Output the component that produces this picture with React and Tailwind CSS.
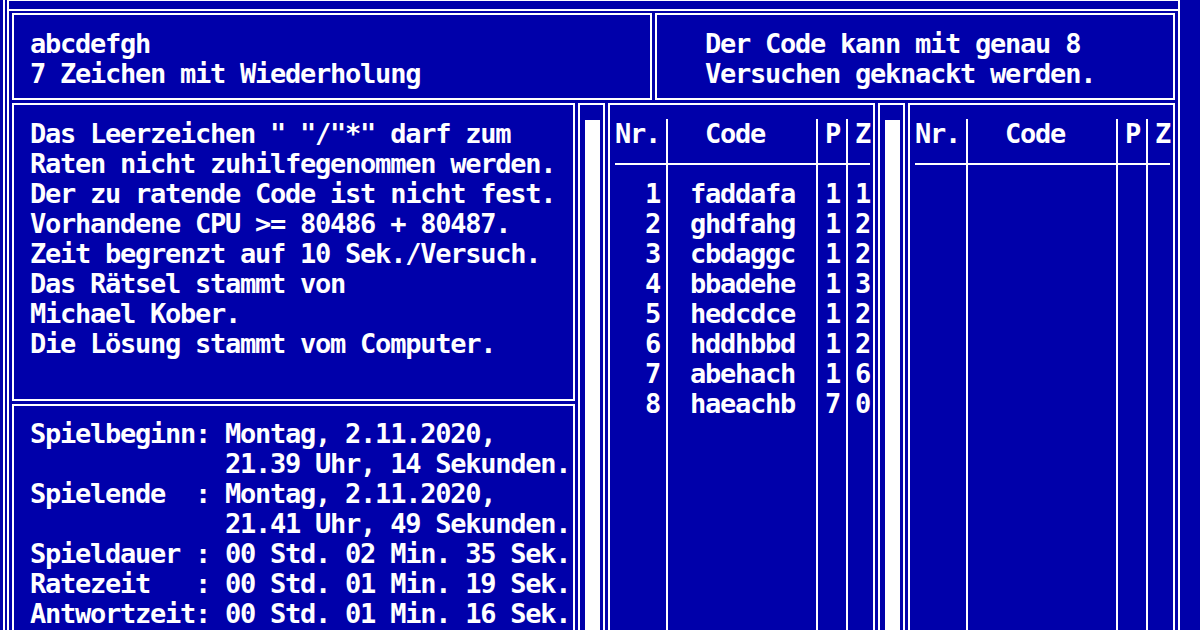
const tries = [
  ['1', 'faddafa', '1', '1'],
  ['2', 'ghdfahg', '1', '2'],
  ['3', 'cbdaggc', '1', '2'],
  ['4', 'bbadehe', '1', '3'],
  ['5', 'hedcdce', '1', '2'],
  ['6', 'hddhbbd', '1', '2'],
  ['7', 'abehach', '1', '6'],
  ['8', 'haeachb', '7', '0'],
];

const rules = [
  'Das Leerzeichen " "/"*" darf zum',
  'Raten nicht zuhilfegenommen werden.',
  'Der zu ratende Code ist nicht fest.',
  'Vorhandene CPU >= 80486 + 80487.',
  'Zeit begrenzt auf 10 Sek./Versuch.',
  'Das Rätsel stammt von',
  'Michael Kober.',
  'Die Lösung stammt vom Computer.',
];

const times = [
  'Spielbeginn: Montag, 2.11.2020,',
  '             21.39 Uhr, 14 Sekunden.',
  'Spielende  : Montag, 2.11.2020,',
  '             21.41 Uhr, 49 Sekunden.',
  'Spieldauer : 00 Std. 02 Min. 35 Sek.',
  'Ratezeit   : 00 Std. 01 Min. 19 Sek.',
  'Antwortzeit: 00 Std. 01 Min. 16 Sek.',
];

// vertical table rule (│)
function Sep() {
  return (
    <div className="flex h-[30px] pl-[6px]">
      <div className="w-[2px] self-stretch bg-white" />
    </div>
  );
}

// horizontal table rule (─)
function Dash() {
  return (
    <div className="h-[30px] pt-[14px]">
      <div className="h-[2px] w-full bg-white" />
    </div>
  );
}

// crossing of both rules (┼)
function Cross() {
  return (
    <div className="flex h-[30px] flex-col">
      <div className="flex h-[14px] pl-[6px]">
        <div className="w-[2px] self-stretch bg-white" />
      </div>
      <div className="h-[2px] w-full bg-white" />
      <div className="flex h-[14px] pl-[6px]">
        <div className="w-[2px] self-stretch bg-white" />
      </div>
    </div>
  );
}

function TryTable({ rows }) {
  const filled = [...rows];
  while (filled.length < 16) filled.push(['', '', '', '']);
  return (
    <div className="w-[267px] shrink-0 border-2 border-white pl-[5px] pt-[14px]">
      <div className="grid grid-cols-[45px_15px_135px_15px_15px_15px_15px] auto-rows-[30px]">
        <div>Nr.</div>
        <Sep />
        <div className="pl-[30px]">Code</div>
        <Sep />
        <div>P</div>
        <Sep />
        <div>Z</div>

        <Dash />
        <Cross />
        <Dash />
        <Cross />
        <Dash />
        <Cross />
        <Dash />

        {filled.map((r, i) => [
          <div key={`n${i}`} className="text-right">{r[0]}</div>,
          <Sep key={`a${i}`} />,
          <div key={`c${i}`} className="pl-[15px]">{r[1]}</div>,
          <Sep key={`b${i}`} />,
          <div key={`p${i}`}>{r[2]}</div>,
          <Sep key={`d${i}`} />,
          <div key={`z${i}`}>{r[3]}</div>,
        ])}
      </div>
    </div>
  );
}

function ScrollBar() {
  return (
    <div className="w-[27px] shrink-0 border-2 border-white pl-[5px] pt-[15px]">
      <div className="h-full w-[15px] bg-white" />
    </div>
  );
}

export default function App() {
  return (
    <div className="h-[630px] w-[1200px] overflow-hidden bg-[#0000AA] font-['DejaVu_Sans_Mono','Liberation_Mono',monospace] text-[27px] font-bold leading-[30px] tracking-[-1.25px] whitespace-pre text-white">
      <div className="flex h-full pl-[3px]">
        <div className="h-full border-l-2 border-white pl-[2px]">
          <div className="flex h-full w-[1173px] flex-col border-x-2 border-white">
            <div className="h-[11px] shrink-0 border-t border-b-2 border-white" />

            <div className="flex flex-col gap-[3px] px-[3px] pt-[2px]">
              <div className="flex h-[87px] gap-[3px]">
                <div className="w-[640px] shrink-0 border-2 border-white pl-[16px] pt-[14px]">
                  <div>abcdefgh</div>
                  <div>7 Zeichen mit Wiederholung</div>
                </div>
                <div className="flex-1 border-2 border-white pl-[48px] pt-[14px]">
                  <div>Der Code kann mit genau 8</div>
                  <div>Versuchen geknackt werden.</div>
                </div>
              </div>

              <div className="flex h-[600px] gap-[3px]">
                <div className="flex w-[563px] shrink-0 flex-col gap-[3px]">
                  <div className="h-[298px] shrink-0 border-2 border-white pl-[16px] pt-[14px]">
                    {rules.map((t) => (
                      <div key={t}>{t}</div>
                    ))}
                  </div>
                  <div className="flex-1 border-2 border-white pl-[16px] pt-[13px]">
                    {times.map((t) => (
                      <div key={t}>{t}</div>
                    ))}
                  </div>
                </div>
                <ScrollBar />
                <TryTable rows={tries} />
                <ScrollBar />
                <TryTable rows={[]} />
              </div>
            </div>
          </div>
        </div>
      </div>
    </div>
  );
}
